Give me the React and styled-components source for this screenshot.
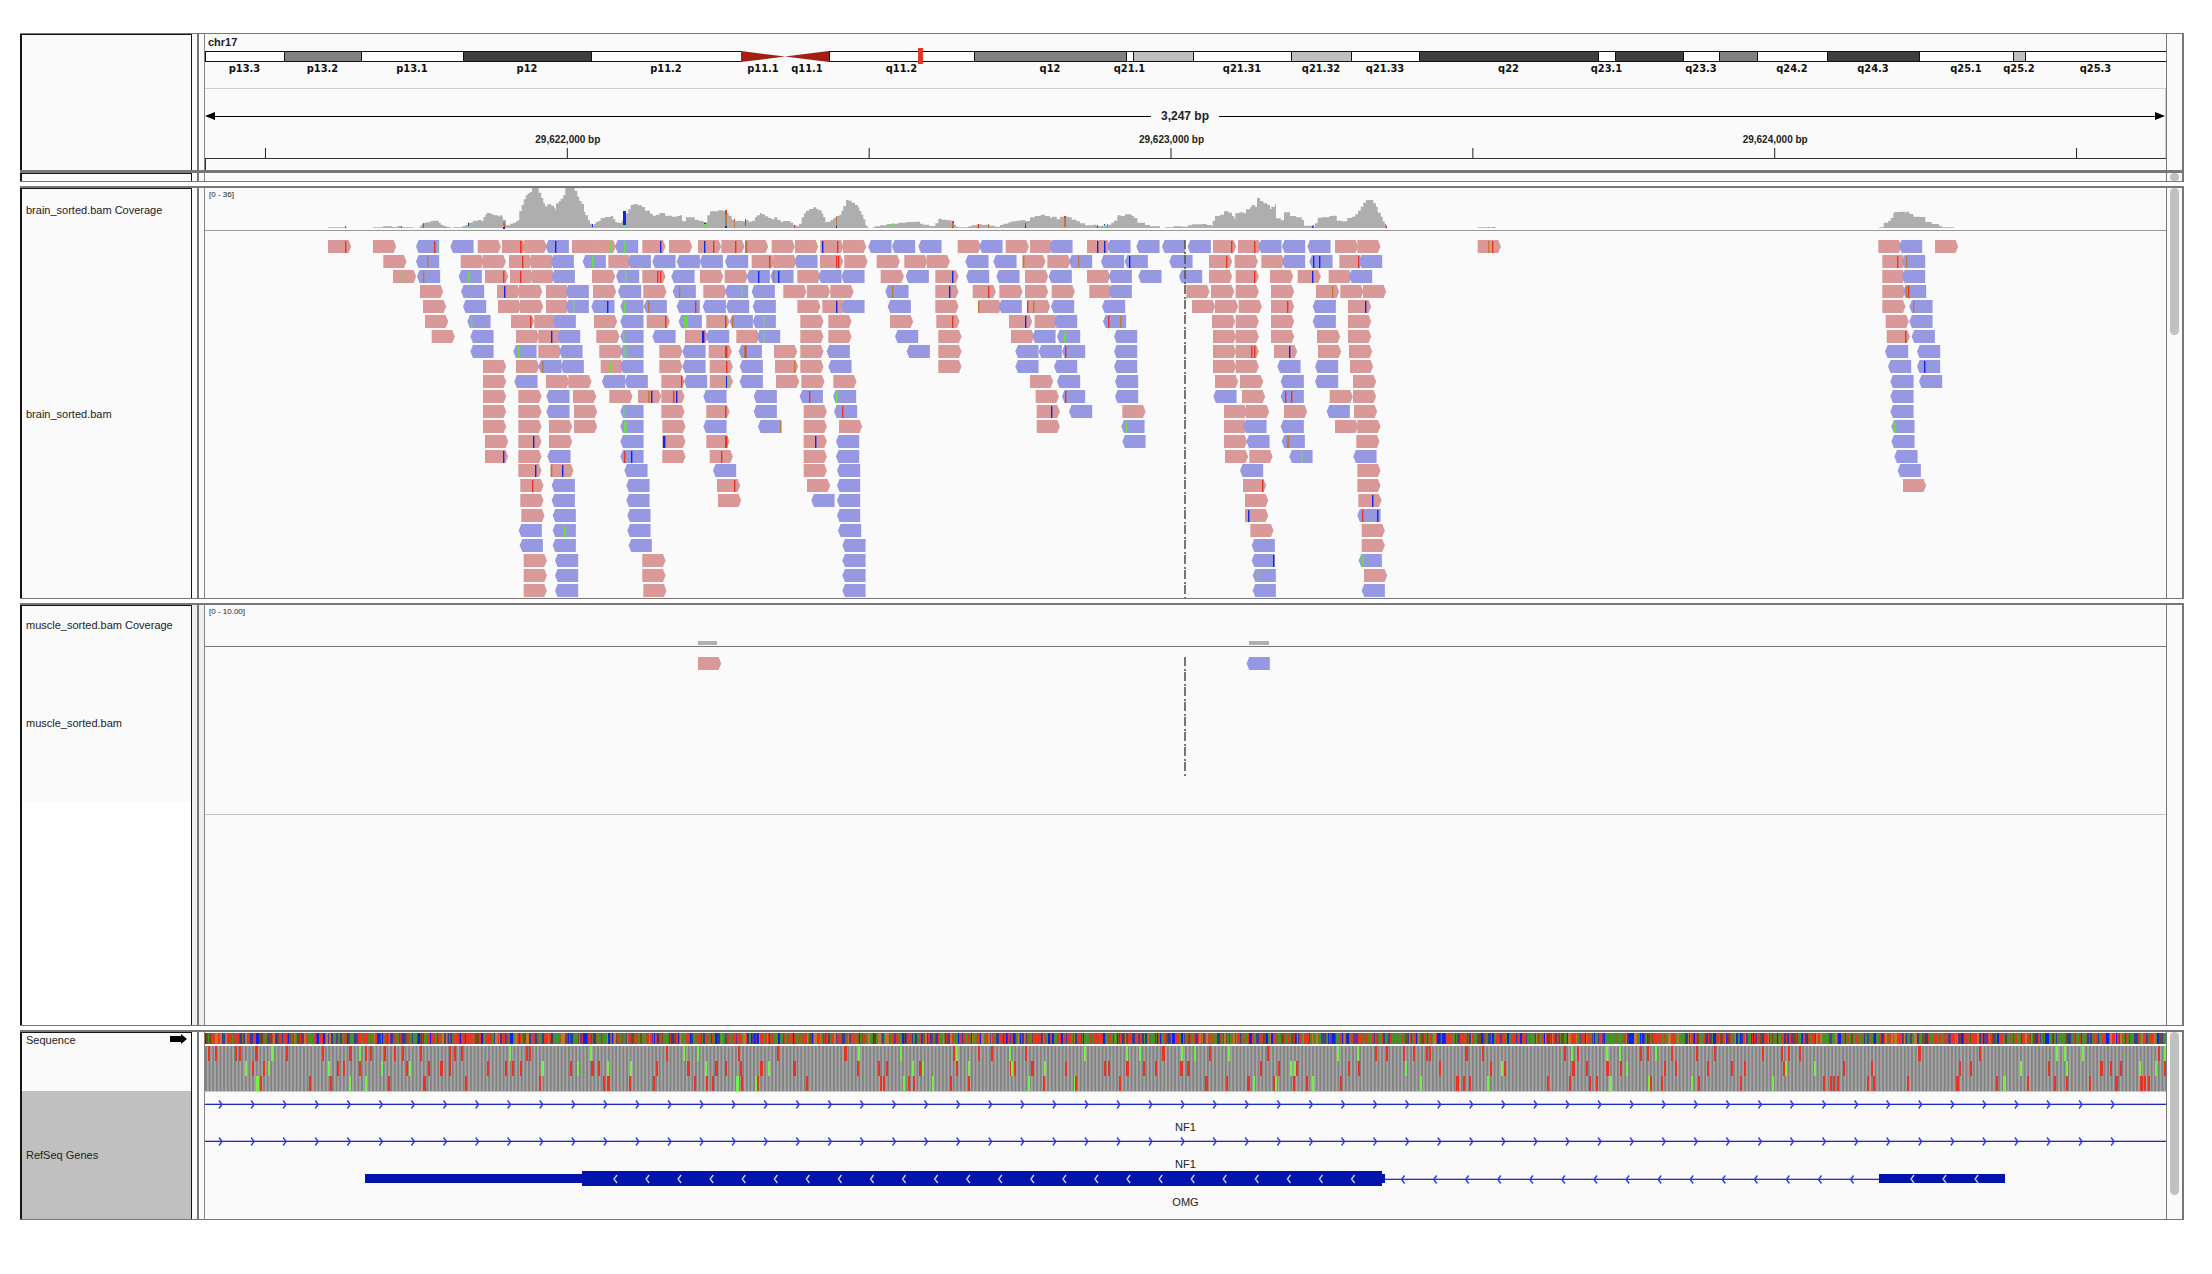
import React from "react";
import styled, { createGlobalStyle } from "styled-components";

const GlobalStyle = createGlobalStyle`
  *, *::before, *::after { box-sizing: border-box; }
  body {
    margin: 0;
    background: #fff;
    color: #222;
    font-family: "Liberation Sans", Arial, sans-serif;
    font-size: 11px;
  }
`;

/* ---------- genome view geometry ---------- */

const START = 205;
const SPAN = 1961;

const RED = "#e93425";
const GREEN = "#67e23d";
const BLUE = "#1226e8";
const ORANGE = "#c07a34";
const MARKS = { r: RED, g: GREEN, b: BLUE, o: ORANGE };

const BANDS = [
  ["p13.3", 79, "#fff"],
  ["p13.2", 77, "#808080"],
  ["p13.1", 102, "#fff"],
  ["p12", 128, "#3f3f3f"],
  ["p11.2", 150, "#fff"],
  ["p11.1", 44, "cenLeft"],
  ["q11.1", 44, "cenRight"],
  ["q11.2", 145, "#fff"],
  ["q12", 152, "#808080"],
  ["q21.1", 7, "#fff"],
  ["", 60, "#bfbfbf"],
  ["q21.31", 98, "#fff"],
  ["q21.32", 60, "#bfbfbf"],
  ["q21.33", 68, "#fff"],
  ["q22", 179, "#3f3f3f"],
  ["q23.1", 17, "#fff"],
  ["", 68, "#3f3f3f"],
  ["q23.3", 36, "#fff"],
  ["", 38, "#808080"],
  ["q24.2", 70, "#fff"],
  ["q24.3", 92, "#3f3f3f"],
  ["q25.1", 94, "#fff"],
  ["q25.2", 12, "#bfbfbf"],
  ["q25.3", 141, "#fff"],
];

/* Reads are written as thirds of a pixel from the offset of their block. */
const READ_BLOCKS = [
  {
    offset: 300,
    rows: [
      "R84 r135 R219 L348 r402 g411 L451 R533 R606 r661 o665 R671 L737 b765 R816 R878 g932 L945 g973 R1027 b1082",
      "R250 L348 o383 R482 R548 R627 r666 R693 L752 L848 g877 R925 L983 L1057",
      "R279 g303 L351 o370 L476 g505 R555 r611 R630 r662 R695 L755 R876 L948 g977 R1027 r1073 r1082",
      "R360 L483 R591 b614 R657 R738 L797 R879 L954 R1030",
      "R369 L489 R594 R660 R738 L797 g820 L874 b922 L961 g973 L1031 o1045",
      "R375 L502 g515 R633 r691 R703 L758 R882 L961 R1040 r1096",
      "R395 L511 R648 R715 b755 L771 R889 L961 g970 L1057",
      "L511 L640 g655 R715 L778 R898 L961 g970 g977 R1078",
      "R549 R648 L715 o727 L782 R902 g932 L961 R1078",
      "R549 L643 R738 R805 L906 L974 R1084 r1144",
      "R549 R655 L739 R819 R928 R1014 o1045 b1054 R1084 r1121 b1128",
      "R549 R655 L739 R822 L961 g970 R1084",
      "R549 R655 R747 R822 L961 g974 g977 R1087",
      "R555 R655 b701 R747 L961 R1087 b1090 b1093",
      "R555 b611 R655 L742 L961 r973 b993 R1087",
      "R655 b707 R751 o755 b787 L973",
      "R661 r697 L755 L979",
      "R661 L755 L979",
      "R664 L758 L982",
      "L656 L758 g794 L982",
      "L659 L758 L986",
      "R671 L765 R1027",
      "R671 L765 R1027",
      "R671 L765 R1030",
    ],
  },
  {
    offset: 660,
    rows: [
      "R27 R114 b134 r160 R184 r225 R255 o257 o260 R335 R405 R481 b487 r532 R549 L625 L696 L775 R893 L958 R1037",
      "L50 L119 L195 R275 r327 R340 L403 R480 r529 r536 R553 R650 R733 R800 L916 L1000 R1087 o1090",
      "L34 R120 R194 L260 b295 L331 o340 b355 R412 L475 L544 R662 L737 R826 b878 L918 L1009 R1095",
      "L38 o57 R130 L195 g244 L275 R370 R441 R511 L676 o698 R826 b868 R938 r985 R1018 R1095",
      "L50 r106 L128 L198 L278 R412 R487 b529 L544 L683 R826 R955 o955 L1016 R1101 r1103 o1119",
      "L56 g73 g79 R139 r196 L209 o217 L278 g310 R421 R505 R690 R829 r878 R1047 b1096",
      "R75 b128 b131 L138 R229 L291 g310 R421 R505 L705 R835 R1053",
      "L67 R146 r195 r198 L236 o252 r255 R342 R421 L500 L740 R835 L1066",
      "L67 R149 r199 L239 R345 o404 R421 L505 R835 L1066",
      "L72 R149 b199 g203 L239 R348 R424 R520",
      "L130 L281 L419 r448 L519 g530",
      "R139 r196 L281 R431 L522 r547",
      "L130 L294 o361 R431 R537",
      "R139 r196 r199 R431 b465 L528",
      "R149 r185 R431 L528",
      "L159 R431 L531",
      "R171 r224 R441 L531",
      "R174 L454 L531",
      "L531",
      "L534",
      "L547",
      "L547",
      "L547",
      "L547",
    ],
  },
  {
    offset: 1030,
    rows: [
      "R0 L58 R171 b201 b223 L232 L319 L396 L473 R549 r605 R624 r673 L685 L756 L832 R915 R982",
      "R52 L117 o144 L213 L284 b298 L418 R537 r589 R614 R694 L756 L838 b850 b868 R928 r985 L987",
      "L56 R171 L236 L325 L447 R537 R617 r673 R720 R803 b847 R896 L957",
      "R65 R178 L236 R469 R543 R617 R723 R858 o907 R931 R999",
      "L63 L216 R486 R555 R626 R723 r772 L848 R954 b1006",
      "R14 L72 L219 r234 o271 R546 R617 R723 L848 R954",
      "L7 L81 g104 L252 R549 R617 R723 R861 R954",
      "L26 L96 r105 L252 R549 R617 r663 r673 R732 b778 R864 R957",
      "L72 L252 R549 R617 L742 L855 R960",
      "R0 L81 L255 R555 R630 L752 L855 R969",
      "R17 L96 r105 L255 L550 R636 L752 r766 r785 R899 R969",
      "R20 b64 L117 R277 R582 R648 R762 L890 R972",
      "R20 L274 g288 R582 L640 L752 R915 R982",
      "L277 R582 L649 L755 o772 o775 R979",
      "R585 R658 L778 g814 L970",
      "L630 R982",
      "R639 r696 R982",
      "R645 R985 b1026",
      "R645 b654 L982 r997 b1042",
      "R661 R995",
      "L665 R995",
      "L665 b730 L986 g997",
      "L668 g682 R1002",
      "L668 L995",
    ],
  },
  {
    offset: 1840,
    rows: [
      "R-1087 o-1056 r-1042 R115 L177 R285",
      "R127 r171 L186 o200",
      "R127 L186",
      "R127 L189 o199 r206",
      "R127 L208 o219",
      "R137 L208",
      "R140 r196 L215",
      "L135 L231",
      "L144 L231 b254",
      "L151 L237",
      "L151",
      "L151",
      "L154 g164",
      "L154",
      "L163",
      "L173",
      "R189",
    ],
  },
];

/* Coverage steps: position,depth row pairs in thirds of a pixel; 144 is the floor. */
const COVERAGE = [
  {
    offset: 300,
    steps:
      "84,142 140,144 219,142 250,139 276,141 293,138 306,142 340,144 358,140 362,135 366,132 372,128 378,127 390,124 398,122 416,128 422,134 430,138 440,141 452,144 460,142 487,139 495,135 505,128 518,122 534,120 545,124 550,112 556,104 560,99 572,102 580,106 594,109 600,106 606,110 609,120 618,136 630,131 640,128 648,124 655,120 658,93 665,75 671,58 677,46 683,40 690,36 696,24 700,20 716,38 724,54 730,70 735,79 742,73 754,77 762,83 766,90 768,70 776,64 782,56 790,45 796,24 800,20 824,33 832,50 838,63 845,72 852,96 856,106 864,121 870,131 876,138 882,131 888,125 896,122 902,114 915,111 932,108 940,118 946,127 956,129 965,122 978,100 985,88 992,75 1000,73 1014,76 1026,81 1035,92 1050,101 1058,107 1068,104 1078,100",
  },
  {
    offset: 660,
    steps:
      "0,99 15,107 36,110 50,108 60,106 66,124 78,112 104,119 116,122 130,126 142,106 150,94 175,91 190,94 200,98 206,107 215,119 222,123 235,122 245,124 258,120 265,125 275,122 285,112 290,106 300,100 306,103 315,109 325,114 335,118 343,112 352,120 362,126 370,123 385,124 392,128 400,135 410,138 417,131 425,112 432,100 438,92 448,87 460,82 468,86 475,91 485,101 490,112 496,127 502,125 512,120 520,114 530,108 538,104 544,92 550,78 558,60 566,62 575,68 585,75 594,82 598,93 604,104 610,118 616,135 620,140 626,144 638,142 645,139 660,136 680,132 700,131 715,128 740,126 765,125 780,131 790,134 808,138 826,130 835,116 845,119 860,121 875,128 882,134 888,140 895,142 925,139 935,136 950,133 965,135 975,134 990,137 1005,140 1020,135 1030,131 1045,127 1055,124 1070,122 1080,121 1095,123",
  },
  {
    offset: 1030,
    steps:
      "0,112 15,108 32,104 45,108 60,114 66,110 80,118 90,110 115,112 125,119 140,124 150,130 165,136 190,134 200,138 215,137 232,134 244,128 252,122 262,106 272,108 285,103 305,108 312,114 322,128 345,135 360,139 390,144 405,142 430,139 458,140 473,136 485,133 515,132 530,135 545,138 548,122 555,108 570,104 582,94 596,98 606,108 613,118 616,100 628,97 640,100 648,88 660,82 665,75 675,80 681,54 690,63 700,70 712,75 720,87 724,80 735,72 738,115 752,121 762,97 780,108 798,112 815,120 822,137 850,140 855,130 863,113 875,112 898,108 910,107 920,122 935,124 952,114 965,110 976,103 984,92 992,80 1000,68 1008,60 1020,60 1030,70 1038,80 1043,98 1052,110 1058,124 1064,136 1070,144 1343,142 1398,144",
  },
  {
    offset: 1840,
    steps:
      "118,142 131,128 145,122 152,114 160,100 163,96 185,95 196,100 198,95 208,102 220,110 240,111 256,126 275,132 297,138 305,142 342,144",
  },
];

/* Mismatch bars of the coverage track: x, top, bottom (px), colour, width */
const COVERAGE_MARKS = [
  [345, 226, 228, "r", 1], [401, 226, 228, "r", 1], [423, 223, 228, "r", 1],
  [468, 223, 226, "b", 1], [468, 226, 228, "g", 1],
  [503, 222, 226, "o", 2], [504, 225, 227, "r", 1], [503, 227, 229, "b", 2],
  [592, 224, 227, "b", 1], [592, 227, 228, "g", 1],
  [623, 211, 225, "b", 3], [623, 225, 228, "g", 3],
  [704, 223, 224, "b", 2], [704, 224, 228, "g", 2],
  [725, 210, 214, "r", 2], [725, 214, 226, "o", 2], [725, 226, 228, "b", 2],
  [734, 219, 221, "r", 1], [734, 221, 228, "o", 1],
  [745, 219, 226, "r", 1], [794, 225, 228, "r", 1],
  [836, 216, 226, "o", 1], [836, 226, 228, "b", 1],
  [892, 223, 228, "g", 1], [952, 221, 223, "r", 2], [952, 223, 227, "o", 2],
  [952, 227, 228, "b", 1], [978, 224, 227, "r", 1], [978, 227, 228, "b", 1],
  [988, 224, 228, "o", 1], [1025, 223, 226, "r", 1], [1025, 226, 228, "b", 1],
  [1064, 216, 218, "r", 2], [1064, 218, 227, "o", 2], [1064, 227, 228, "g", 2],
  [1097, 225, 228, "r", 1], [1097, 227, 228, "b", 1],
  [1104, 224, 225, "b", 1], [1104, 225, 228, "g", 2], [1107, 224, 228, "o", 1],
  [1312, 226, 228, "b", 1], [1313, 225, 227, "r", 1],
  [1385, 224, 228, "o", 1], [1386, 226, 228, "r", 1],
  [1488, 227, 228, "o", 1], [1493, 227, 228, "o", 1],
];

/* Start (g) and stop (r) codons for the three reading frames; capitals are wider runs. */
const FRAME_BLOCKS = [
  {
    offset: 0,
    scale: 2.119,
    frames: [
      "r443 r458 r500 r508 R543 G577 r608 r685 R743 g762 r776 r786 r815 r838 r853 r892 r953 r964 r980 g1081 r1116 r1123 g1253 r1414 g1449 g1480 r1565",
      "g521 r536 r559 g570 g697 r717 r729 r763 g810 r863 g868 r909 R935 r954 r1035 r1073 r1086 r1105 G1150 r1209 g1224 R1255 r1270 g1288 g1338 r1392 R1459 g1497 R1518 r1539",
      "G545 r552 r657 r702 g741 g776 r825 R899 r987 r1144 r1279 R1290 r1336 r1386 r1472 r1498 r1510 G1563",
    ],
  },
  {
    offset: 740,
    scale: 2.119,
    frames: [
      "r80 R223 g252 g341 r454 g460 r506 r533 g572 r606 g730 g821 g848 R897 g936 g964 r995 g1036 r1118 g1268 g1310 r1348 r1371 r1406 r1428 r1456 r1462 R1540",
      "r2 R45 g62 R115 r251 r294 r311 g366 R382 g388 r459 g486 r575 g577 r582 R620 g646 r690 r774 r781 R821 r857 r881 R935 R950 r1103 r1142 g1168 g1176 r1180 r1291 r1311 g1411 r1483",
      "r5 g33 r38 r141 r299 r306 g348 r359 r368 g409 r447 r486 g613 r644 g709 r712 r806 R989 r1032 R1077 g1089 r1132 g1135 r1174 r1201 g1215 r1273 g1442 R1520 r1535 r1547",
    ],
  },
  {
    offset: 1480,
    scale: 2.142,
    frames: [
      "r7 r181 g197 r209 g273 g300 r345 r360 g376 r411 r465 r503 r607 r647 r662 r686 R942 r1070 g1237 g1253 g1291 r1454 g1467",
      "r24 g47 r53 R200 r229 R273 r303 g315 r396 r419 r488 r539 r567 r651 g656 g717 r780 r840 r1028 r1052 g1158 r1219 g1258 R1331 r1351 r1374 g1413 g1448 r1467",
      "g17 r145 r192 r235 r250 G280 g363 r366 r389 g455 r470 r560 g627 r736 r752 r759 r767 r832 r843 r917 R1022 r1107 G1123 r1174 r1232 r1258 r1306 R1363 R1418 r1425 r1433",
    ],
  },
];

/* ---------- layout ---------- */

const Page = styled.main`
  display: flex;
  flex-direction: column;
  gap: 4px;
  padding: 33px 28px 54px 20px;
`;

const Panel = styled.section`
  display: grid;
  grid-template-columns: 172px 12px minmax(0, 1fr) 18px;
  border-top: ${(p) => (p.$thin ? 1 : 2)}px solid #777;
  border-bottom: 1px solid #777;
  background: #fafafa;
`;

const Names = styled.div`
  display: flex;
  flex-direction: column;
  border: solid #151515;
  border-width: 1px 1px 0 2px;
  background: ${(p) => p.$background || "#fafafa"};
`;

const Name = styled.div`
  display: flex;
  align-items: ${(p) => (p.$top ? "flex-start" : "center")};
  justify-content: space-between;
  height: ${(p) => p.$height}px;
  padding: ${(p) => (p.$top ? "1px 4px" : "0 4px")};
  background: ${(p) => p.$background || "#fafafa"};
  line-height: 12px;
`;

const Divider = styled.div`
  display: flex;
  justify-content: center;
  background: ${(p) => p.$background || "#fafafa"};

  &::before {
    content: "";
    width: 2px;
    background: #777;
  }
`;

const Data = styled.div`
  display: flex;
  flex-direction: column;
  min-width: 0;
  border-left: 1px solid #858585;
`;

const ScrollColumn = styled.div`
  display: flex;
  justify-content: center;
  border: solid #777;
  border-width: 0 2px 0 1px;
`;

const Thumb = styled.div`
  width: 9px;
  height: ${(p) => p.$height}px;
  border-radius: 5px;
  background: #c1c1c1;
`;

const Track = styled.div`
  position: relative;
  border-bottom: ${(p) => p.$line || 0}px solid ${(p) => p.$color || "#999"};
`;

const Range = styled.span`
  position: absolute;
  left: 4px;
  top: 1px;
  font-size: 8px;
  line-height: 11px;
  color: #222;
`;

const Canvas = styled.svg`
  display: block;
  width: 100%;
  height: ${(p) => p.$height}px;
`;

const Bar = styled.div`
  grid-column: 1 / -1;
  height: 3px;
  background: #777;
`;

/* ---------- header ---------- */

const Chromosome = styled.h1`
  margin: 0;
  padding-left: 3px;
  font-size: 11px;
  line-height: 17px;
`;

const Ideogram = styled.div`
  position: relative;
  display: flex;
  padding-bottom: 12px;
`;

const Band = styled.div`
  display: flex;
  flex-direction: column;
  align-items: center;
  flex: ${(p) => p.$size} 1 0;
  min-width: 0;
  font: bold 11px/14px "DejaVu Sans Condensed", "DejaVu Sans", sans-serif;
  color: #111;
  white-space: nowrap;
`;

const Stain = styled.div`
  align-self: stretch;
  height: 11px;
  border: solid #111;
  border-width: 1px 0 1px 1px;
  background: ${(p) => p.$color};
`;

const Locus = styled.div`
  position: absolute;
  top: -3px;
  left: 36.35%;
  width: 5px;
  height: 16px;
  background: #e2382b;
`;

const Ruler = styled.div`
  padding-top: 17px;
  border: solid #ccccda;
  border-width: 1px 1px 0 0;
`;

const Extent = styled.div`
  display: flex;
  align-items: center;
  gap: 10px;
  font-weight: bold;
  font-size: 12px;
  line-height: 20px;
`;

const Arrow = styled.div`
  display: flex;
  flex-direction: ${(p) => (p.$right ? "row-reverse" : "row")};
  align-items: center;
  flex: 1;

  &::before {
    content: "";
    border: solid transparent;
    border-width: 4px 0;
    ${(p) => (p.$right ? "border-left: 10px solid #000;" : "border-right: 10px solid #000;")}
  }

  &::after {
    content: "";
    flex: 1;
    height: 1px;
    background: #000;
  }
`;

const Positions = styled.div`
  display: flex;
  margin: 7px 0 1px;
  font-weight: bold;
  font-size: 10px;
  line-height: 14px;
  text-align: center;
`;

const Position = styled.span`
  flex: ${(p) => p.$size} 1 0;
`;

const RegionStrip = styled.div`
  height: 12px;
  border: solid #333;
  border-width: 1px 0 0 1px;
`;

/* ---------- genes ---------- */

const GeneLabel = styled.div`
  height: 17px;
  padding-top: 5px;
  line-height: 12px;
  text-align: center;
`;

/* ---------- drawings ---------- */

function Plot({ top, height, children }) {
  return (
    <Canvas
      $height={height}
      viewBox={`${START} ${top} ${SPAN} ${height}`}
      preserveAspectRatio="none"
      aria-hidden="true"
    >
      {children}
    </Canvas>
  );
}

function Read({ x, y, reverse }) {
  const w = 23.2;
  const d = reverse
    ? `M${x} ${y + 6.5}l2.6 -6.5h${w - 2.6}v13h${2.6 - w}z`
    : `M${x} ${y}h${w - 2.6}l2.6 6.5l-2.6 6.5h${2.6 - w}z`;
  return <path d={d} fill={reverse ? "#9698e1" : "#d99999"} />;
}

function Reads() {
  return READ_BLOCKS.map(({ offset, rows }) =>
    rows.map((row, n) => {
      const y = 240 + n * 15 - (n > 14 ? 1 : 0);
      return row.split(" ").map((item, i) => {
        const kind = item[0];
        const x = offset + Number(item.slice(1)) / 3;
        const key = `${offset}-${n}-${i}`;
        return kind === "R" || kind === "L" ? (
          <Read key={key} x={x} y={y} reverse={kind === "L"} />
        ) : (
          <rect key={key} x={Math.round(x - 0.5)} y={y + 1} width="1.4" height="12" fill={MARKS[kind]} />
        );
      });
    })
  );
}

function CoverageShape() {
  let d = "M205 228";
  COVERAGE.forEach(({ offset, steps }) => {
    steps.split(" ").forEach((step) => {
      const [x, y] = step.split(",").map(Number);
      d += `H${(offset + x / 3).toFixed(1)}V${(180 + y / 3).toFixed(1)}`;
    });
  });
  return (
    <>
      <path d={`${d}H2166V228Z`} fill="#aeaeae" />
      {COVERAGE_MARKS.map(([x, y1, y2, kind, w], i) => (
        <rect key={i} x={x} y={y1} width={w} height={y2 - y1} fill={MARKS[kind]} />
      ))}
    </>
  );
}

function CenterLine({ y1, y2 }) {
  return (
    <line x1="1185" x2="1185" y1={y1} y2={y2} stroke="#555" strokeWidth="1.6" strokeDasharray="9 3 2 1" />
  );
}

function Bases() {
  const palette = [
    "#e93425", "#e93425", "#e93425", "#46912a", "#46912a", "#0a22f5",
    "#c4762c", "#8a6a20", "#5c3a8c", "#7a4a1c", "#c8402a", "#46912a", "#2c3f9a",
  ];
  const cells = [];
  let seed = 17;
  for (let x = START; x < START + SPAN; ) {
    seed = (seed * 16807) % 2147483647;
    const color = palette[seed % palette.length];
    const width = seed % 11 === 0 ? 3 : seed % 3 === 0 ? 2 : 1;
    cells.push(<rect key={x} x={x} y="1033" width={width} height="11" fill={color} />);
    x += width;
  }
  return cells;
}

function Frames() {
  return (
    <>
      <defs>
        <pattern id="codons" x="205" y="0" width="3.63" height="15" patternUnits="userSpaceOnUse">
          <rect width="3.63" height="15" fill="#a5a5a5" />
          <rect width="1.8" height="15" fill="#828282" />
        </pattern>
      </defs>
      <rect x={START} y="1046" width={SPAN} height="45" fill="url(#codons)" />
      {FRAME_BLOCKS.map(({ offset, scale, frames }) =>
        frames.map((frame, n) =>
          frame.split(" ").map((item, i) => {
            const wide = item[0] < "a";
            const kind = item[0].toLowerCase();
            const w = wide ? 3 : 2;
            const x = Math.round(offset + Number(item.slice(1)) / scale - w / 2);
            return (
              <rect
                key={`${offset}-${n}-${i}`}
                x={x}
                y={1046 + n * 15}
                width={w}
                height="15"
                fill={kind === "r" ? "#e93425" : "#74f047"}
              />
            );
          })
        )
      )}
      <rect x={START} y="1091" width={SPAN} height="1" fill="#c8c8c8" />
    </>
  );
}

function chevrons(first, count, y, left) {
  let d = "";
  for (let i = 0; i < count; i += 1) {
    const x = (first + i * 32.07).toFixed(1);
    d += left ? `M${x} ${y}m3 -4l-3 4l3 4` : `M${x} ${y}m-3 -4l3 4l-3 4`;
  }
  return d;
}

function ForwardGene({ y }) {
  return (
    <g fill="none" stroke="#2c3bea" strokeWidth="1.4">
      <rect x={START} y={y - 1} width={SPAN} height="1" fill="#b6b9ea" stroke="none" />
      <rect x={START} y={y} width={SPAN} height="1" fill="#1f2ac4" stroke="none" />
      <path d={chevrons(222, 60, y + 0.5, false)} />
    </g>
  );
}

function ReverseGene() {
  return (
    <g fill="none">
      <rect x="1385" y="1178" width="494" height="1" fill="#b6b9ea" />
      <rect x="1385" y="1179" width="494" height="1" fill="#2a34c0" />
      <rect x="365" y="1174" width="218" height="9" fill="#0214ab" />
      <rect x="582" y="1171" width="800" height="15" fill="#0214ab" />
      <rect x="1381" y="1174" width="4" height="9" fill="#0214ab" />
      <rect x="1879" y="1174" width="126" height="9" fill="#0214ab" />
      <path d={chevrons(614, 24, 1179, true)} stroke="#c9cdf2" strokeWidth="1.4" />
      <path d={chevrons(1401.6, 15, 1179.5, true)} stroke="#2c3bea" strokeWidth="1.4" />
      <path d={chevrons(1911, 3, 1179, true)} stroke="#c9cdf2" strokeWidth="1.4" />
    </g>
  );
}

function Stained({ color }) {
  if (color !== "cenLeft" && color !== "cenRight") return <Stain $color={color} />;
  return (
    <Canvas $height={11} viewBox="0 0 44 11" preserveAspectRatio="none" aria-hidden="true">
      <path d={color === "cenLeft" ? "M0 0L44 5.5L0 11Z" : "M44 0L0 5.5L44 11Z"} fill="#a21f14" />
    </Canvas>
  );
}

/* ---------- panels ---------- */

function HeaderPanel() {
  return (
    <Panel $thin>
      <Names />
      <Divider />
      <Data>
        <Chromosome>chr17</Chromosome>
        <Ideogram>
          {BANDS.map(([name, size, color], i) => (
            <Band key={i} $size={size}>
              <Stained color={color} />
              {name}
            </Band>
          ))}
          <Locus />
        </Ideogram>
        <Ruler>
          <Extent>
            <Arrow />
            3,247 bp
            <Arrow $right />
          </Extent>
          <Positions>
            <Position $size={61} />
            <Position $size={604}>29,622,000 bp</Position>
            <Position $size={604}>29,623,000 bp</Position>
            <Position $size={604}>29,624,000 bp</Position>
            <Position $size={88} />
          </Positions>
          <Plot top={148} height={10}>
            {[265, 567, 869, 1171, 1473, 1775, 2077].map((x) => (
              <rect key={x} x={x} y="148" width="1" height="10" fill="#222" />
            ))}
          </Plot>
        </Ruler>
        <RegionStrip />
      </Data>
      <ScrollColumn />
      <Bar />
      <Names />
      <Divider />
      <Data />
      <ScrollColumn>
        <Thumb $height={8} />
      </ScrollColumn>
    </Panel>
  );
}

function BrainPanel() {
  return (
    <Panel>
      <Names>
        <Name $height={41}>brain_sorted.bam Coverage</Name>
        <Name $height={368}>brain_sorted.bam</Name>
      </Names>
      <Divider />
      <Data>
        <Track $line={1}>
          <Range>[0 - 36]</Range>
          <Plot top={188} height={42}>
            <CoverageShape />
          </Plot>
        </Track>
        <Track>
          <Plot top={231} height={367}>
            <Reads />
            <CenterLine y1={240} y2={598} />
          </Plot>
        </Track>
      </Data>
      <ScrollColumn>
        <Thumb $height={147} />
      </ScrollColumn>
    </Panel>
  );
}

function MusclePanel() {
  return (
    <Panel>
      <Names $background="#fff">
        <Name $height={38}>muscle_sorted.bam Coverage</Name>
        <Name $height={158}>muscle_sorted.bam</Name>
      </Names>
      <Divider $background="#efefef" />
      <Data>
        <Track $line={1} $color="#777">
          <Range>[0 - 10.00]</Range>
          <Plot top={605} height={41}>
            <rect x="698" y="641" width="19" height="4" fill="#b0b0b0" />
            <rect x="1249" y="641" width="20" height="4" fill="#b0b0b0" />
          </Plot>
        </Track>
        <Track $line={1} $color="#c4c4c4">
          <Plot top={647} height={167}>
            <Read x={698} y={657} />
            <Read x={1246.6} y={657} reverse />
            <CenterLine y1={657} y2={776} />
          </Plot>
        </Track>
        <Plot top={815} height={210} />
      </Data>
      <ScrollColumn />
    </Panel>
  );
}

function FeaturePanel() {
  return (
    <Panel>
      <Names>
        <Name $height={58} $top>
          Sequence
          <svg width="17" height="10" viewBox="0 0 17 10" role="img" aria-label="Forward strand">
            <path d="M0 2H11V0L17 5L11 10V8H0Z" fill="#000" />
          </svg>
        </Name>
        <Name $height={128} $background="#c0c0c0">
          RefSeq Genes
        </Name>
      </Names>
      <Divider />
      <Data>
        <Plot top={1032} height={60}>
          <rect x={START} y="1032" width={SPAN} height="14" fill="#fff" />
          <Bases />
          <Frames />
        </Plot>
        <Plot top={1092} height={24}>
          <ForwardGene y={1104} />
        </Plot>
        <GeneLabel>NF1</GeneLabel>
        <Plot top={1133} height={20}>
          <ForwardGene y={1141} />
        </Plot>
        <GeneLabel>NF1</GeneLabel>
        <Plot top={1170} height={21}>
          <ReverseGene />
        </Plot>
        <GeneLabel>OMG</GeneLabel>
      </Data>
      <ScrollColumn>
        <Thumb $height={163} />
      </ScrollColumn>
    </Panel>
  );
}

export default function App() {
  return (
    <>
      <GlobalStyle />
      <Page>
        <HeaderPanel />
        <BrainPanel />
        <MusclePanel />
        <FeaturePanel />
      </Page>
    </>
  );
}
